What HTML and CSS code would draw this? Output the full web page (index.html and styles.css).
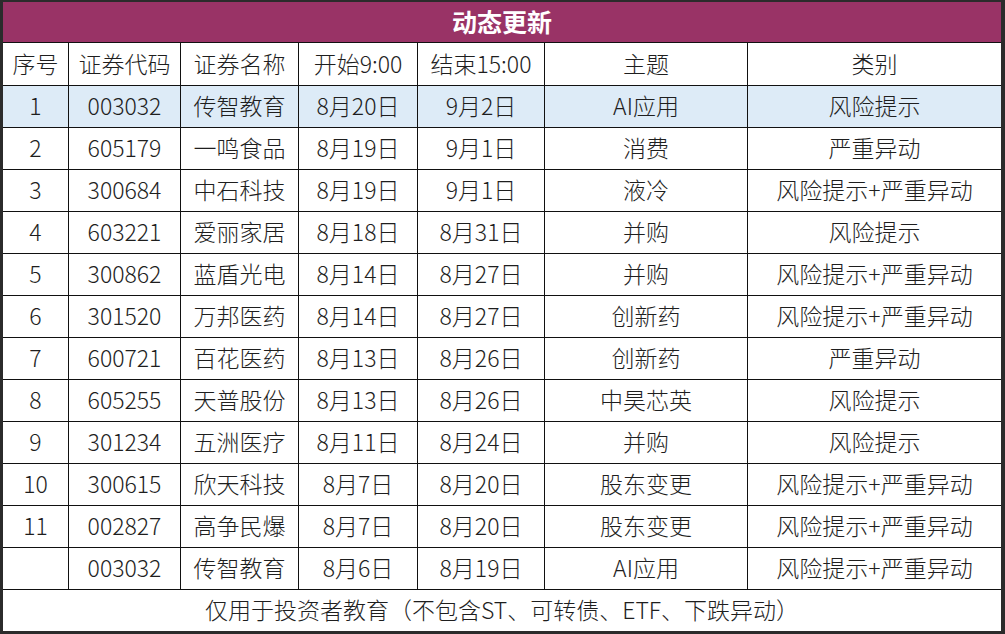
FILE: index.html
```html
<!DOCTYPE html>
<html lang="zh-CN">
<head>
<meta charset="utf-8">
<title>动态更新</title>
<link rel="stylesheet" href="styles.css">
</head>
<body>
<div class="frame">
  <div class="grid">
    <div class="title">动态更新</div>

    <div class="c first">序号</div><div class="c">证券代码</div><div class="c">证券名称</div><div class="c">开始9:00</div><div class="c">结束15:00</div><div class="c">主题</div><div class="c">类别</div>

    <div class="c first hl">1</div><div class="c hl">003032</div><div class="c hl">传智教育</div><div class="c hl">8月20日</div><div class="c hl">9月2日</div><div class="c hl">AI应用</div><div class="c hl">风险提示</div>

    <div class="c first">2</div><div class="c">605179</div><div class="c">一鸣食品</div><div class="c">8月19日</div><div class="c">9月1日</div><div class="c">消费</div><div class="c">严重异动</div>

    <div class="c first">3</div><div class="c">300684</div><div class="c">中石科技</div><div class="c">8月19日</div><div class="c">9月1日</div><div class="c">液冷</div><div class="c">风险提示+严重异动</div>

    <div class="c first">4</div><div class="c">603221</div><div class="c">爱丽家居</div><div class="c">8月18日</div><div class="c">8月31日</div><div class="c">并购</div><div class="c">风险提示</div>

    <div class="c first">5</div><div class="c">300862</div><div class="c">蓝盾光电</div><div class="c">8月14日</div><div class="c">8月27日</div><div class="c">并购</div><div class="c">风险提示+严重异动</div>

    <div class="c first">6</div><div class="c">301520</div><div class="c">万邦医药</div><div class="c">8月14日</div><div class="c">8月27日</div><div class="c">创新药</div><div class="c">风险提示+严重异动</div>

    <div class="c first">7</div><div class="c">600721</div><div class="c">百花医药</div><div class="c">8月13日</div><div class="c">8月26日</div><div class="c">创新药</div><div class="c">严重异动</div>

    <div class="c first">8</div><div class="c">605255</div><div class="c">天普股份</div><div class="c">8月13日</div><div class="c">8月26日</div><div class="c">中昊芯英</div><div class="c">风险提示</div>

    <div class="c first">9</div><div class="c">301234</div><div class="c">五洲医疗</div><div class="c">8月11日</div><div class="c">8月24日</div><div class="c">并购</div><div class="c">风险提示</div>

    <div class="c first">10</div><div class="c">300615</div><div class="c">欣天科技</div><div class="c">8月7日</div><div class="c">8月20日</div><div class="c">股东变更</div><div class="c">风险提示+严重异动</div>

    <div class="c first">11</div><div class="c">002827</div><div class="c">高争民爆</div><div class="c">8月7日</div><div class="c">8月20日</div><div class="c">股东变更</div><div class="c">风险提示+严重异动</div>

    <div class="c first"></div><div class="c">003032</div><div class="c">传智教育</div><div class="c">8月6日</div><div class="c">8月19日</div><div class="c">AI应用</div><div class="c">风险提示+严重异动</div>

    <div class="c first footer">仅用于投资者教育（不包含ST、可转债、ETF、下跌异动）</div>
  </div>
</div>
</body>
</html>
```

FILE: styles.css
```css
html, body {
  margin: 0;
  padding: 0;
  background: #2b2b2b;
}

.frame {
  width: 1005px;
  height: 634px;
  box-sizing: border-box;
  border-style: solid;
  border-color: #2b2b2b;
  border-width: 2px 4px 3px 3px;
  background: #ffffff;
}

.grid {
  display: grid;
  grid-template-columns: 65px 112px 118px 119px 127px 203px 254px;
  grid-template-rows: 40px 43px repeat(12, 42px) 42px;
  font-family: "Noto Sans CJK SC", "Noto Sans", sans-serif;
  font-size: 23px;
  font-weight: 300;
  line-height: 1;
  color: #1e1e1e;
}

.title {
  grid-column: 1 / -1;
  background: #993366;
  color: #ffffff;
  font-weight: bold;
  font-size: 25px;
  display: flex;
  align-items: center;
  justify-content: center;
  padding-bottom: 2px;
}

.c {
  box-sizing: border-box;
  border-top: 1px solid #111111;
  border-left: 1px solid #111111;
  display: flex;
  align-items: center;
  justify-content: center;
  white-space: nowrap;
  background: #ffffff;
  padding-bottom: 2px;
}

.c.first {
  border-left: none;
}

.c.hl {
  background: #ddebf7;
}

.footer {
  grid-column: 1 / -1;
}
```
